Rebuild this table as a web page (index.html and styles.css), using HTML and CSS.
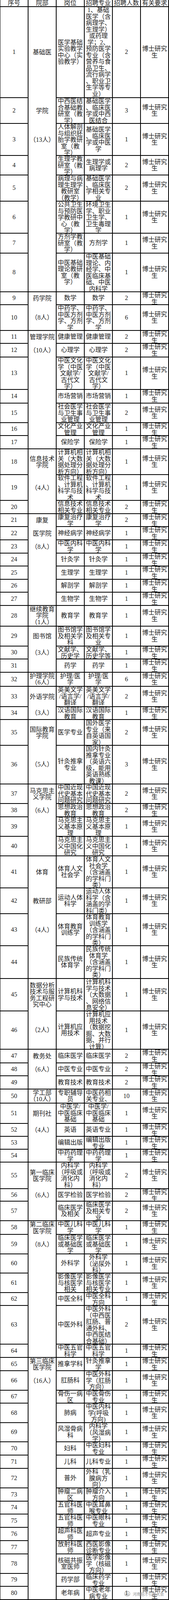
FILE: index.html
```html
<!DOCTYPE html>
<html lang="zh-CN">
<head>
<meta charset="utf-8">
<title>招聘岗位表</title>
<link rel="stylesheet" href="styles.css">
</head>
<body>
<div class="sheet">
<div class="c">序号</div><div class="c">院部</div><div class="c">岗位</div><div class="c">招聘专业</div><div class="c">招聘人数</div><div class="c">有关要求</div>

<div class="c">1</div><div class="c o">基础医</div><div class="c">医学基础实验教学中心（实验教学）</div><div class="c"><p>1、基础医学（含病理学、生理学）或药理<br>学；2、预防医学专业（含营养与食品卫生、流行病学、职业卫生学等专业）</p></div><div class="c">2</div><div class="c">博士研究生</div>
<div class="c">2</div><div class="c o">学院</div><div class="c">中西医结合基础教研室（教学）</div><div class="c">基础医学、临床医学或中西医结合</div><div class="c">3</div><div class="c">博士研究生</div>
<div class="c">3</div><div class="c o">（13人）</div><div class="c"><p>人体解剖与组织胚胎学教研室（教<br>学）</p></div><div class="c">基础医学、临床医学或中医学</div><div class="c">1</div><div class="c">博士研究生</div>
<div class="c">4</div><div class="c o"></div><div class="c">生理学教研室（教学）</div><div class="c">生理学或病理学</div><div class="c">2</div><div class="c">博士研究生</div>
<div class="c">5</div><div class="c o"></div><div class="c"><p>病理与病理生理学教研室<br>（教学）</p></div><div class="c">基础医学、临床医学相关专业</div><div class="c">2</div><div class="c">博士研究生</div>
<div class="c">6</div><div class="c o"></div><div class="c"><p>公共卫生与预防医学教研中心（教<br>学）</p></div><div class="c">环境卫生学、职业卫生学、卫生毒理学</div><div class="c">1</div><div class="c">博士研究生</div>
<div class="c">7</div><div class="c o"></div><div class="c">方剂学教研室（教学）</div><div class="c">方剂学</div><div class="c">1</div><div class="c">博士研究生</div>
<div class="c">8</div><div class="c"></div><div class="c"><p>中医基础理论教研室（教<br>学）</p></div><div class="c">中医基础理论、内经学、中医临床基础、中医内科学</div><div class="c">1</div><div class="c">博士研究生</div>

<div class="c">9</div><div class="c o">药学院</div><div class="c">数学</div><div class="c">数学</div><div class="c">2</div><div class="c">博士研究生</div>
<div class="c">10</div><div class="c">（8人）</div><div class="c">中药学、中医方剂学、方剂学</div><div class="c">中药学、中医方剂学、方剂学</div><div class="c">6</div><div class="c">博士研究生</div>

<div class="c">11</div><div class="c o">管理学院</div><div class="c">健康管理</div><div class="c">健康管理</div><div class="c">2</div><div class="c">博士研究生</div>
<div class="c">12</div><div class="c o">（10人）</div><div class="c">心理学</div><div class="c">心理学</div><div class="c">2</div><div class="c">博士研究生</div>
<div class="c">13</div><div class="c o"></div><div class="c"><p>中医文化学（中医文献学/古代文<br>学）</p></div><div class="c"><p>中医文化学（中医文献学/古代文<br>学）</p></div><div class="c">1</div><div class="c">博士研究生</div>
<div class="c">14</div><div class="c o"></div><div class="c">市场营销</div><div class="c">市场营销</div><div class="c">1</div><div class="c">博士研究生</div>
<div class="c">15</div><div class="c o"></div><div class="c">社会医学与卫生事业管理</div><div class="c">社会医学与卫生事业管理</div><div class="c">2</div><div class="c">博士研究生</div>
<div class="c">16</div><div class="c o"></div><div class="c">文化产业管理</div><div class="c">文化产业管理</div><div class="c">1</div><div class="c">博士研究生</div>
<div class="c">17</div><div class="c"></div><div class="c">保险学</div><div class="c">保险学</div><div class="c">1</div><div class="c">博士研究生</div>

<div class="c">18</div><div class="c o">信息技术学院</div><div class="c">计算机相关（大数据处理分析方向）</div><div class="c">计算机相关（大数据处理分析方向）</div><div class="c">1</div><div class="c">博士研究生</div>
<div class="c">19</div><div class="c o">（4人）</div><div class="c">软件工程、计算机科学与技术</div><div class="c">软件工程、计算机科学与技术</div><div class="c">1</div><div class="c">博士研究生</div>
<div class="c">20</div><div class="c"></div><div class="c">信息技术相关专业</div><div class="c">信息技术相关专业</div><div class="c">2</div><div class="c">博士研究生</div>

<div class="c">21</div><div class="c o">康复</div><div class="c">康复治疗学</div><div class="c">康复治疗学</div><div class="c">2</div><div class="c">博士研究生</div>
<div class="c">22</div><div class="c o">医学院</div><div class="c">神经病学</div><div class="c">神经病学</div><div class="c">1</div><div class="c">博士研究生</div>
<div class="c">23</div><div class="c o">（8人）</div><div class="c">中医内科学</div><div class="c">中医内科学</div><div class="c">1</div><div class="c">博士研究生</div>
<div class="c">24</div><div class="c o"></div><div class="c">针灸学</div><div class="c">针灸学</div><div class="c">1</div><div class="c">博士研究生</div>
<div class="c">25</div><div class="c o"></div><div class="c">生理学</div><div class="c">生理学</div><div class="c">1</div><div class="c">博士研究生</div>
<div class="c">26</div><div class="c o"></div><div class="c">解剖学</div><div class="c">解剖学</div><div class="c">1</div><div class="c">博士研究生</div>
<div class="c">27</div><div class="c"></div><div class="c">生物学</div><div class="c">生物学</div><div class="c">1</div><div class="c">博士研究生</div>

<div class="c">28</div><div class="c"><p>继续教育学院<br>（1人）</p></div><div class="c">教育学</div><div class="c">教育学</div><div class="c">1</div><div class="c">博士研究生</div>

<div class="c">29</div><div class="c o">图书馆</div><div class="c">图书馆学及相关学科</div><div class="c">图书馆学及相关专业</div><div class="c">1</div><div class="c">博士研究生</div>
<div class="c">30</div><div class="c o">（3人）</div><div class="c">文献学、历史学</div><div class="c">文献学、历史学等</div><div class="c">1</div><div class="c">博士研究生</div>
<div class="c">31</div><div class="c"></div><div class="c">药学</div><div class="c">药学</div><div class="c">1</div><div class="c">博士研究生</div>

<div class="c">32</div><div class="c">护理学院（6人）</div><div class="c">护理/医学</div><div class="c">护理/医学</div><div class="c">6</div><div class="c">博士研究生</div>

<div class="c">33</div><div class="c o">外语学院</div><div class="c">英美文学/语言学/翻译</div><div class="c">英美文学/语言学/翻译</div><div class="c">2</div><div class="c">博士研究生</div>
<div class="c">34</div><div class="c">（3人）</div><div class="c">汉语国际教育</div><div class="c">汉语国际教育</div><div class="c">1</div><div class="c">博士研究生</div>

<div class="c">35</div><div class="c o">国际教育学院</div><div class="c">医学专业</div><div class="c">国外医学专业（来自英语国家）</div><div class="c">2</div><div class="c">博士研究生</div>
<div class="c">36</div><div class="c">（5人）</div><div class="c">针灸推拿专业</div><div class="c">国内针灸推拿专业（英语六级，能用英语熟练教课）</div><div class="c">3</div><div class="c">博士研究生</div>

<div class="c">37</div><div class="c o">马克思主义学院</div><div class="c">中国近现代史基本问题研究</div><div class="c">中国近现代史基本问题研究</div><div class="c">2</div><div class="c">博士研究生</div>
<div class="c">38</div><div class="c o">（6人）</div><div class="c">思想政治教育</div><div class="c">思想政治教育</div><div class="c">2</div><div class="c">博士研究生</div>
<div class="c">39</div><div class="c o"></div><div class="c">马克思主义基本原理</div><div class="c">马克思主义基本原理</div><div class="c">1</div><div class="c">博士研究生</div>
<div class="c">40</div><div class="c"></div><div class="c">马克思主义中国化研究</div><div class="c">马克思主义中国化研究</div><div class="c">1</div><div class="c">博士研究生</div>

<div class="c">41</div><div class="c o">体育</div><div class="c">体育人文社会学</div><div class="c"><p>体育人文社会学<br>（含涵盖的学科门类）</p></div><div class="c">1</div><div class="c">博士研究生</div>
<div class="c">42</div><div class="c o">教研部</div><div class="c">运动人体科学</div><div class="c">运动人体科学（含涵盖的学科门类）</div><div class="c">1</div><div class="c">博士研究生</div>
<div class="c">43</div><div class="c o">（4人）</div><div class="c">体育教育训练学</div><div class="c"><p>体育教育训练学<br>（含涵盖的学科门类）</p></div><div class="c">1</div><div class="c">博士研究生</div>
<div class="c">44</div><div class="c"></div><div class="c">民族传统体育学</div><div class="c"><p>民族传统体育学<br>（含涵盖的学科门类）</p></div><div class="c">1</div><div class="c">博士研究生</div>

<div class="c">45</div><div class="c o">数据分析技术与服务工程研究中心</div><div class="c">计算机科学与技术</div><div class="c">计算机科学与技术（大数据、网络信息安全）</div><div class="c">1</div><div class="c">博士研究生</div>
<div class="c">46</div><div class="c">（2人）</div><div class="c">计算机应用技术</div><div class="c"><p>计算机应用技术<br>（数据挖掘、大数据、并行计算）</p></div><div class="c">1</div><div class="c">博士研究生</div>

<div class="c">47</div><div class="c o">教务处</div><div class="c">临床医学</div><div class="c">临床医学</div><div class="c">2</div><div class="c">博士研究生</div>
<div class="c">48</div><div class="c o">（6人）</div><div class="c">中医专业</div><div class="c">中医专业</div><div class="c">2</div><div class="c">博士研究生</div>
<div class="c">49</div><div class="c"></div><div class="c">教育技术</div><div class="c">教育技术</div><div class="c">2</div><div class="c">博士研究生</div>

<div class="c">50</div><div class="c"><p>学工部<br>（10人）</p></div><div class="c">专职辅导员</div><div class="c">中医药相关专业、</div><div class="c">10</div><div class="c">博士研究生</div>

<div class="c">51</div><div class="c o">期刊社</div><div class="c">中医学/中医临床基础</div><div class="c">中医学/中医临床基础</div><div class="c">1</div><div class="c">博士研究生</div>
<div class="c">52</div><div class="c o">（4人）</div><div class="c">英语</div><div class="c">英语专业</div><div class="c">1</div><div class="c">博士研究生</div>
<div class="c">53</div><div class="c o"></div><div class="c">编辑出版</div><div class="c">编辑出版专业</div><div class="c">1</div><div class="c">博士研究生</div>
<div class="c">54</div><div class="c"></div><div class="c">中药药理学</div><div class="c">中药药理学</div><div class="c">1</div><div class="c">博士研究生</div>

<div class="c">55</div><div class="c o">第一临床医学院</div><div class="c"><p>内科学<br>（呼吸或消化内<br>科）</p></div><div class="c"><p>内科学<br>（呼吸或消化内<br>科）</p></div><div class="c">2</div><div class="c">博士研究生</div>
<div class="c">56</div><div class="c o">（6人）</div><div class="c">医学检验</div><div class="c">医学检验</div><div class="c">2</div><div class="c">博士研究生</div>
<div class="c">57</div><div class="c"></div><div class="c">临床医学及相关</div><div class="c">临床医学及相关专业</div><div class="c">2</div><div class="c">博士研究生</div>

<div class="c">58</div><div class="c o">第二临床医学院</div><div class="c">中医儿科学</div><div class="c">中医儿科学</div><div class="c">1</div><div class="c">博士研究生</div>
<div class="c">59</div><div class="c o">（8人）</div><div class="c">临床医学或基础医学</div><div class="c">临床医学或基础医学</div><div class="c">1</div><div class="c">博士研究生</div>
<div class="c">60</div><div class="c o"></div><div class="c">外科学</div><div class="c"><p>外科学<br>（泌尿外<br>科）</p></div><div class="c">1</div><div class="c">博士研究生</div>
<div class="c">61</div><div class="c o"></div><div class="c">影像医学与核医学相关</div><div class="c">影像医学与核医学相关专业</div><div class="c">1</div><div class="c">博士研究生</div>
<div class="c">62</div><div class="c o"></div><div class="c">中医全科</div><div class="c">中医全科方向</div><div class="c">1</div><div class="c">博士研究生</div>
<div class="c">63</div><div class="c o"></div><div class="c">中医外科</div><div class="c">中医外科（中西医肛肠、普通外科、中西医结合基础）</div><div class="c">2</div><div class="c">博士研究生</div>
<div class="c">64</div><div class="c"></div><div class="c">中医五官科学</div><div class="c">中医五官科学</div><div class="c">1</div><div class="c">博士研究生</div>

<div class="c">65</div><div class="c o">第三临床医学院</div><div class="c">推拿学科</div><div class="c">针灸推拿学</div><div class="c">1</div><div class="c">博士研究生</div>
<div class="c">66</div><div class="c o">（16人）</div><div class="c">肛肠科</div><div class="c">中医外科学（肛肠方向）</div><div class="c">1</div><div class="c">博士研究生</div>
<div class="c">67</div><div class="c o"></div><div class="c">骨伤一病区</div><div class="c">中医骨伤专业</div><div class="c">1</div><div class="c">博士研究生</div>
<div class="c">68</div><div class="c o"></div><div class="c">肺病</div><div class="c"><p>中医内科学(呼吸<br>方向)</p></div><div class="c">1</div><div class="c">博士研究生</div>
<div class="c">69</div><div class="c o"></div><div class="c">风湿骨病科</div><div class="c"><p>内科学<br>（风湿病<br>学）</p></div><div class="c">1</div><div class="c">博士研究生</div>
<div class="c">70</div><div class="c o"></div><div class="c">妇科</div><div class="c">中医妇科专业</div><div class="c">1</div><div class="c">博士研究生</div>
<div class="c">71</div><div class="c o"></div><div class="c">儿科</div><div class="c">儿科专业</div><div class="c">1</div><div class="c">博士研究生</div>
<div class="c">72</div><div class="c o"></div><div class="c">普外</div><div class="c"><p>外科（乳腺病方<br>向）</p></div><div class="c">1</div><div class="c">博士研究生</div>
<div class="c">73</div><div class="c o"></div><div class="c">肿瘤二病区</div><div class="c">肿瘤介入方向</div><div class="c">1</div><div class="c">博士研究生</div>
<div class="c">74</div><div class="c o"></div><div class="c">五官科医师</div><div class="c">中医耳鼻喉专业</div><div class="c">1</div><div class="c">博士研究生</div>
<div class="c">75</div><div class="c o"></div><div class="c">五官科医师</div><div class="c">中医眼科专业</div><div class="c">1</div><div class="c">博士研究生</div>
<div class="c">76</div><div class="c o"></div><div class="c">超声科医师</div><div class="c">超声专业</div><div class="c">1</div><div class="c">博士研究生</div>
<div class="c">77</div><div class="c o"></div><div class="c">放射科医师</div><div class="c">西医影像诊断专业</div><div class="c">1</div><div class="c">博士研究生</div>
<div class="c">78</div><div class="c o"></div><div class="c">核磁共振室医师</div><div class="c">医学影像学（核磁方向）</div><div class="c">1</div><div class="c">博士研究生</div>
<div class="c">79</div><div class="c o"></div><div class="c">药学部</div><div class="c">临床药学专业</div><div class="c">1</div><div class="c">博士研究生</div>
<div class="c">80</div><div class="c"></div><div class="c">老年病</div><div class="c">中医老年病专业</div><div class="c">1</div><div class="c">博士研究生</div>

<div class="mark">
<svg class="mark-icon" viewBox="0 0 16 16" width="16" height="14" preserveAspectRatio="none" aria-hidden="true">
<circle cx="8" cy="8" r="7" fill="none" stroke="currentColor" stroke-width="1.2"/>
<path d="M4.2 9.6c0-2.1 1.7-3.6 3.8-3.6s3.8 1.5 3.8 3.6c0 .6-.1 1-.4 1.5l.4 1.5-1.6-.7c-.6.3-1.4.5-2.2.5-2.1 0-3.8-1.3-3.8-2.8z" fill="none" stroke="currentColor" stroke-width="1.1"/>
<circle cx="6.6" cy="9.2" r=".7" fill="currentColor"/>
<circle cx="9.4" cy="9.2" r=".7" fill="currentColor"/>
</svg>
<span>河南招才引智大会</span>
</div>
</div>
</body>
</html>
```

FILE: styles.css
```css
html, body {
  margin: 0;
  padding: 0;
  background: #fff;
}

.sheet {
  position: relative;
  width: 433px;
  box-sizing: border-box;
  border-left: 1px solid #000;
  display: grid;
  grid-template-columns: repeat(6, 72px);
  grid-template-rows:
    18px
    233px 66px 82px 50px 67px 82px 51px 99px
    33px 66px
    33px 35px 83px 35px 50px 33px 34px
    66px 66px 34px
    33px 34px 34px 33px 34px 33px 34px
    53px
    51px 33px 34px
    36px
    52px 33px
    66px 99px
    50px 34px 50px 50px
    82px 66px 82px 84px
    83px 98px
    35px 33px 34px
    36px
    52px 33px 33px 33px
    68px 32px 50px
    35px 50px 49px 50px 33px 99px 34px
    34px 50px 33px 50px 49px 34px 34px 50px 34px 33px 34px 34px 34px 50px 33px 34px;
  font-family: "Liberation Serif", "Noto Sans CJK SC", serif;
  font-size: 16px;
  line-height: 16.5px;
  color: #1a1a1a;
  line-break: anywhere;
}

.c {
  box-sizing: border-box;
  min-width: 0;
  min-height: 0;
  padding: 0 2px;
  border-right: 2px solid #000;
  border-bottom: 2px solid #000;
  display: flex;
  flex-direction: column;
  justify-content: center;
  justify-content: safe center;
  text-align: center;
  overflow: hidden;
  background: #fff;
}

.c.o {
  border-bottom: 0;
}

.c p {
  margin: 0;
}

.mark {
  position: absolute;
  right: 13px;
  bottom: 9px;
  display: flex;
  align-items: center;
  gap: 6px;
  font: 10px/11px "Noto Sans CJK SC", sans-serif;
  color: #8a8a8a;
  text-shadow: 0 0 2px #fff, 0 0 1px #fff;
  opacity: 0.9;
}

.mark-icon {
  display: block;
  color: #9a9a9a;
}
```
